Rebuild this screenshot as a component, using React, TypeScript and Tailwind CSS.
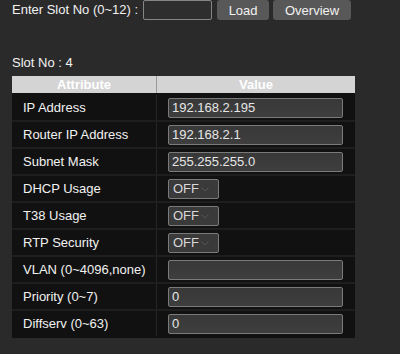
import React from "react";

const rows: { label: string; kind: "text" | "select"; value: string }[] = [
  { label: "IP Address", kind: "text", value: "192.168.2.195" },
  { label: "Router IP Address", kind: "text", value: "192.168.2.1" },
  { label: "Subnet Mask", kind: "text", value: "255.255.255.0" },
  { label: "DHCP Usage", kind: "select", value: "OFF" },
  { label: "T38 Usage", kind: "select", value: "OFF" },
  { label: "RTP Security", kind: "select", value: "OFF" },
  { label: "VLAN (0~4096,none)", kind: "text", value: "" },
  { label: "Priority (0~7)", kind: "text", value: "0" },
  { label: "Diffserv (0~63)", kind: "text", value: "0" },
];

export default function App() {
  return (
    <div
      className="w-[400px] h-[354px] bg-[#2a2a2a] text-[13px] text-[#f2f2f2] overflow-hidden"
      style={{ fontFamily: "Arial, 'Liberation Sans', sans-serif" }}
    >
      <div className="flex items-center h-[20px] pl-[12px]">
        <span className="mr-[5px]">Enter Slot No (0~12) :</span>
        <div className="w-[69px] h-[20px] bg-[#2e2e2e] border border-[#858585] rounded-[2px]" />
        <button className="ml-[5px] w-[52px] h-[20px] bg-[#585858] rounded-[3px] text-[#f2f2f2] text-[13px] leading-none">
          Load
        </button>
        <button className="ml-[4px] w-[78px] h-[20px] bg-[#585858] rounded-[3px] text-[#f2f2f2] text-[13px] leading-none">
          Overview
        </button>
      </div>
      <div className="pl-[12px] mt-[35px] leading-[15px]">Slot No : 4</div>
      <div className="ml-[12px] mt-[6px] w-[343px] bg-[#111111] pb-[2px]">
        <div className="flex h-[17px] bg-[#d4d4d4] text-white font-bold leading-[17px] mb-[2px]">
          <div className="w-[145px] text-center border-r border-[#9a9a9a]">Attribute</div>
          <div className="flex-1 text-center">Value</div>
        </div>
        {rows.map((r, i) => (
          <div
            key={r.label}
            className={`flex items-center ${i < rows.length - 1 ? "h-[27px] border-b-2 border-[#1e1e1e]" : "h-[25px]"}`}
          >
            <div className="w-[145px] h-full flex items-center pl-[11px] border-r border-[#262626]">
              {r.label}
            </div>
            <div className="flex-1 h-full flex items-center pl-[11px]">
              {r.kind === "text" ? (
                <div className="w-[175px] h-[20px] bg-gradient-to-b from-[#383838] to-[#3e3e3e] border border-[#7a7a7a] rounded-[2px] flex items-center pl-[3px] text-[#e6e6e6]">
                  {r.value}
                </div>
              ) : (
                <div className="w-[51px] h-[20px] bg-[#3a3a3a] border border-[#7a7a7a] rounded-[2px] flex items-center pl-[4px] text-[#d8d8d8] relative">
                  {r.value}
                  <svg
                    className="absolute right-[9px] top-[7px]"
                    width="8"
                    height="5"
                    viewBox="0 0 8 5"
                  >
                    <path d="M0.5 0.5 L4 4 L7.5 0.5" fill="none" stroke="#555" strokeWidth="1" />
                  </svg>
                </div>
              )}
            </div>
          </div>
        ))}
      </div>
    </div>
  );
}
